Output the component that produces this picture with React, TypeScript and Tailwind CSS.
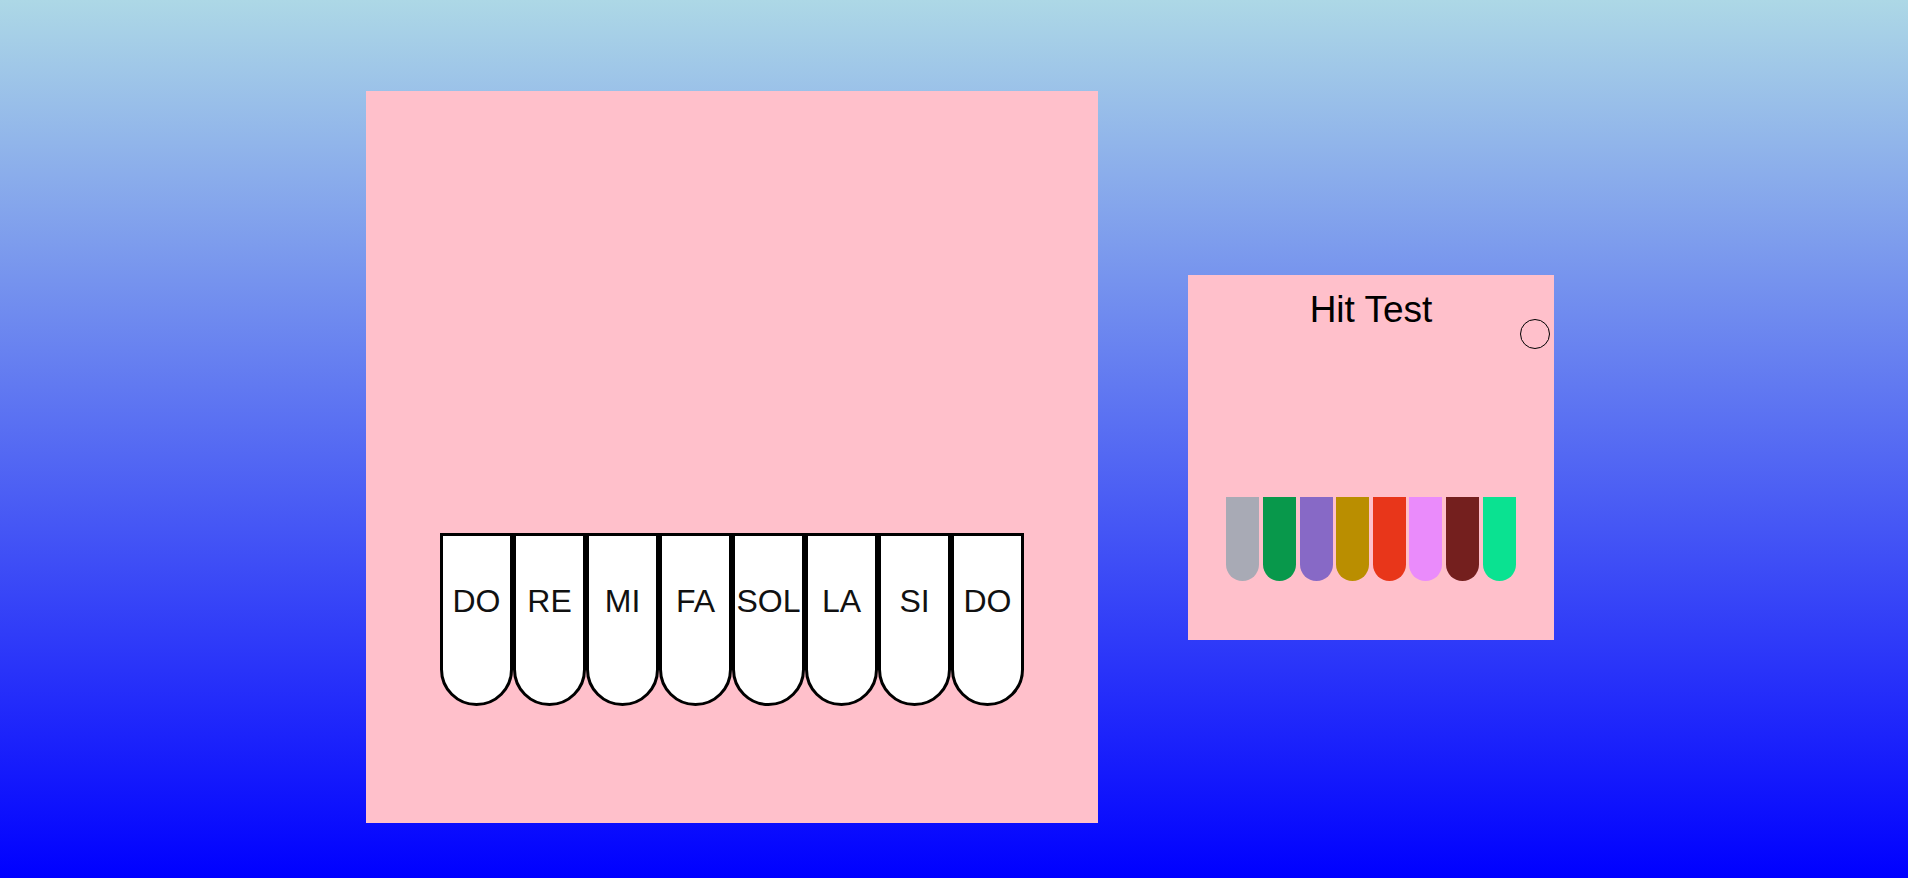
const notes = ["DO", "RE", "MI", "FA", "SOL", "LA", "SI", "DO"];

const swatches = [
  "bg-[#a8aab5]",
  "bg-[#08984b]",
  "bg-[#8769c6]",
  "bg-[#ba8e00]",
  "bg-[#e8361a]",
  "bg-[#ea8bfb]",
  "bg-[#741f1e]",
  "bg-[#0ae291]",
];

const Key = ({ label }: { label: string }) => {
  return (
    <div className="w-[73px] h-[173px] shrink-0 bg-white border-[3px] border-black rounded-b-full flex justify-center pt-[47px]">
      <span className="text-[32px] leading-[normal] text-[#111]">{label}</span>
    </div>
  );
};

const HitKey = ({ color }: { color: string }) => {
  return <div className={`w-[33px] h-[84px] shrink-0 rounded-b-full ${color}`}></div>;
};

export default function App() {
  return (
    <div className="h-screen w-full bg-[linear-gradient(#add8e6,#0000ff)] font-['Liberation_Sans',Arial,sans-serif] overflow-hidden">
      <div className="flex items-center gap-[90px] pl-[366px] pt-[91px]">
        <div className="w-[732px] h-[732px] bg-[#ffc0cb] flex flex-col items-center pt-[442px]">
          <div className="flex">
            {notes.map((n, i) => (
              <Key key={i} label={n} />
            ))}
          </div>
        </div>

        <div className="relative w-[366px] h-[365px] bg-[#ffc0cb] flex flex-col items-center pt-[14px]">
          <h2 className="text-[37px] leading-[normal] text-black">Hit Test</h2>
          <div className="absolute right-[4px] top-[44px] w-[30px] h-[30px] rounded-full border border-black"></div>
          <div className="flex gap-[3.6px] mt-[166px]">
            {swatches.map((c, i) => (
              <HitKey key={i} color={c} />
            ))}
          </div>
        </div>
      </div>
    </div>
  );
}
